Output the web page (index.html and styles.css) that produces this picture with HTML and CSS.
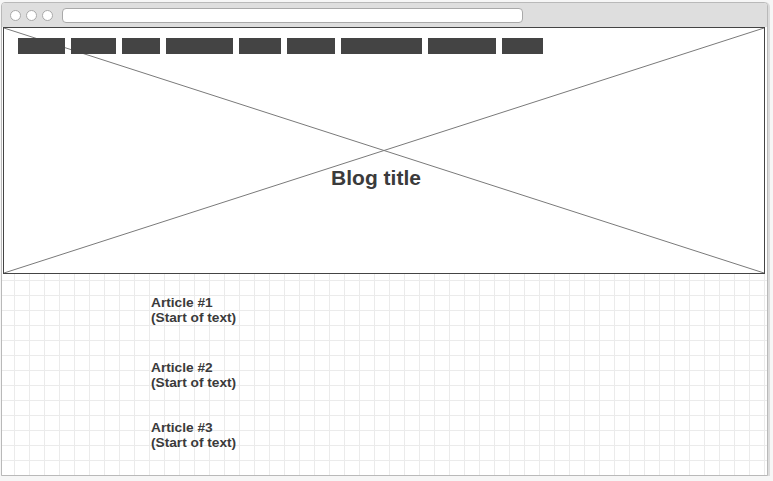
FILE: index.html
```html
<!DOCTYPE html>
<html>
<head>
<meta charset="utf-8">
<link rel="stylesheet" href="styles.css">
</head>
<body>
<div class="window">
  <div class="topbar">
    <span class="dot"></span><span class="dot"></span><span class="dot"></span>
    <div class="address"></div>
  </div>
  <div class="hero">
    <svg class="cross" viewBox="0 0 100 100" preserveAspectRatio="none">
      <line x1="0" y1="0" x2="100" y2="100" vector-effect="non-scaling-stroke"/>
      <line x1="0" y1="100" x2="100" y2="0" vector-effect="non-scaling-stroke"/>
    </svg>
    <nav class="nav">
      <span class="nb w1"></span><span class="nb w2"></span><span class="nb w3"></span>
      <span class="nb w4"></span><span class="nb w5"></span><span class="nb w6"></span>
      <span class="nb w7"></span><span class="nb w8"></span><span class="nb w9"></span>
    </nav>
    <h1 class="title">Blog title</h1>
  </div>
  <div class="main">
    <div class="article a1">Article #1<br>(Start of text)</div>
    <div class="article a2">Article #2<br>(Start of text)</div>
    <div class="article a3">Article #3<br>(Start of text)</div>
  </div>
</div>
</body>
</html>
```
FILE: styles.css
```css
html, body {
  margin: 0;
  padding: 0;
  background: #f6f6f6;
}
body {
  font-family: "Liberation Sans", Arial, sans-serif;
  overflow: hidden;
}
.window {
  box-sizing: border-box;
  margin: 2px 0 0 1px;
  width: 767px;
  height: 474px;
  border: 1px solid #b9b9b9;
  border-radius: 4px 4px 0 0;
  display: flex;
  flex-direction: column;
  background: #fff;
  box-shadow: 1px 1px 0 1px #dcdcdc;
}
.topbar {
  height: 24px;
  flex: none;
  background: #dedede;
  border-radius: 3px 3px 0 0;
  display: flex;
  align-items: center;
  padding-left: 8px;
  gap: 5px;
}
.dot {
  box-sizing: border-box;
  width: 11px;
  height: 11px;
  border-radius: 50%;
  background: #fff;
  border: 1px solid #a9a9a9;
  flex: none;
}
.address {
  box-sizing: border-box;
  margin-left: 4px;
  width: 461px;
  height: 15px;
  background: #fff;
  border: 1px solid #a9a9a9;
  border-radius: 4px;
}
.hero {
  position: relative;
  box-sizing: border-box;
  flex: none;
  height: 247px;
  margin: 0 2px 0 1px;
  border: 1px solid #444;
  background: #fff;
  padding: 10px 0 0 14px;
}
.cross {
  position: absolute;
  left: 0;
  top: 0;
  width: 100%;
  height: 100%;
  z-index: 0;
}
.cross line {
  stroke: #7a7a7a;
  stroke-width: 1;
}
.nav {
  position: relative;
  z-index: 1;
  display: flex;
  gap: 6px;
  height: 16px;
}
.nb { background: #444; height: 16px; display: block; }
.w1 { width: 47px; }
.w2 { width: 45px; }
.w3 { width: 38px; }
.w4 { width: 67px; }
.w5 { width: 42px; }
.w6 { width: 48px; }
.w7 { width: 81px; }
.w8 { width: 68px; }
.w9 { width: 41px; }
.title {
  position: relative;
  z-index: 1;
  margin: 112px 0 0 0;
  padding-right: 30px;
  text-align: center;
  font-size: 21px;
  line-height: 24px;
  font-weight: bold;
  color: #3b3b3b;
}
.main {
  flex: 1;
  background-color: #fff;
  background-image:
    linear-gradient(to right, #ebebeb 1px, transparent 1px),
    linear-gradient(to bottom, #ebebeb 1px, transparent 1px);
  background-size: 15px 15px;
  background-position: 12px 6px;
  padding: 21px 0 0 149px;
}
.article {
  font-size: 13.7px;
  line-height: 15px;
  font-weight: bold;
  color: #3b3b3b;
}
.a2 { margin-top: 35px; }
.a3 { margin-top: 30px; }
```
